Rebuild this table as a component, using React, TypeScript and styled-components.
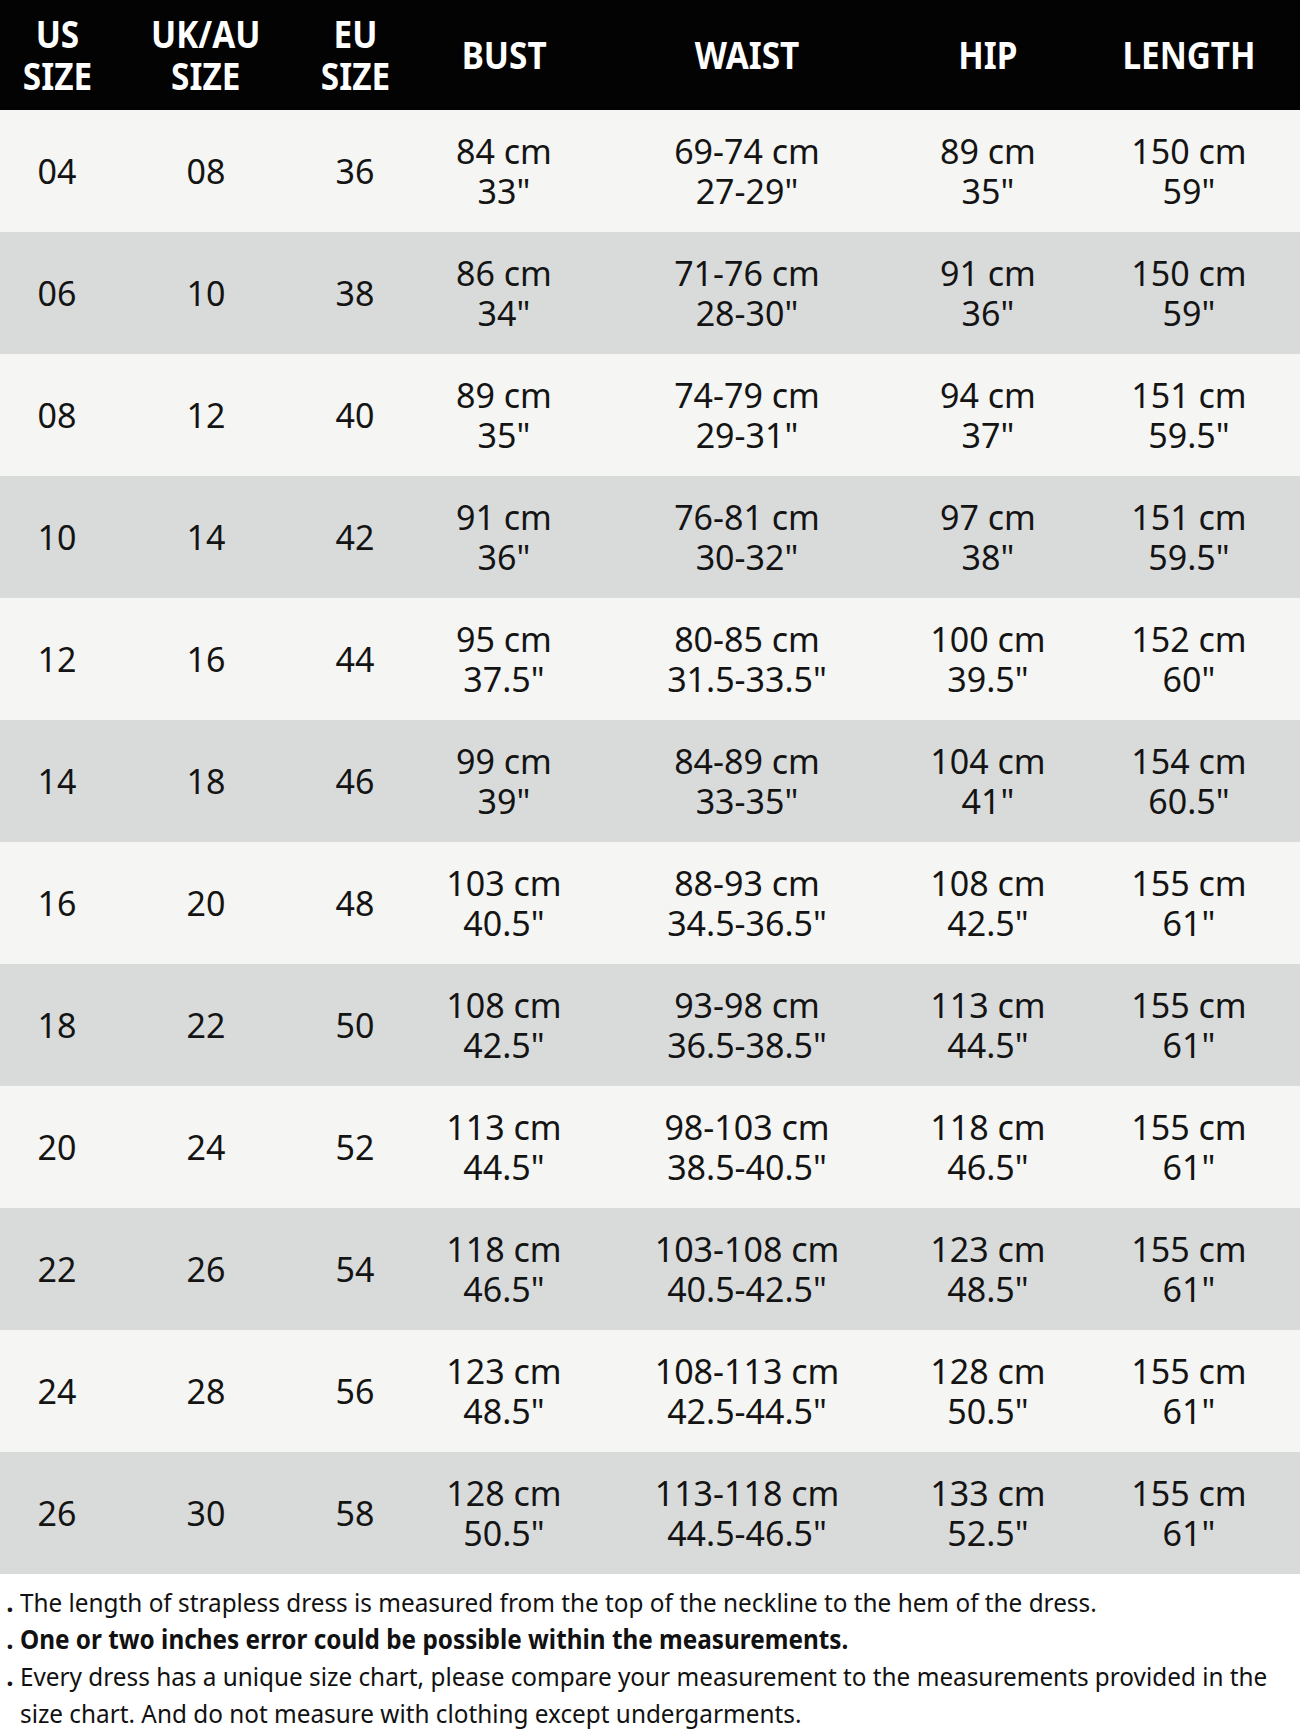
import { Fragment } from 'react'
import styled, { createGlobalStyle } from 'styled-components'

const GlobalStyle = createGlobalStyle`
  html, body {
    margin: 0;
    padding: 0;
    background: #ffffff;
  }
  body {
    width: 1300px;
    font-family: "Noto Sans", "Open Sans", sans-serif;
    color: #141414;
  }
`

type Row = [string, string, string, string[], string[], string[], string[]]

const rows: Row[] = [
  ['04', '08', '36', ['84 cm', '33"'], ['69-74 cm', '27-29"'], ['89 cm', '35"'], ['150 cm', '59"']],
  ['06', '10', '38', ['86 cm', '34"'], ['71-76 cm', '28-30"'], ['91 cm', '36"'], ['150 cm', '59"']],
  ['08', '12', '40', ['89 cm', '35"'], ['74-79 cm', '29-31"'], ['94 cm', '37"'], ['151 cm', '59.5"']],
  ['10', '14', '42', ['91 cm', '36"'], ['76-81 cm', '30-32"'], ['97 cm', '38"'], ['151 cm', '59.5"']],
  ['12', '16', '44', ['95 cm', '37.5"'], ['80-85 cm', '31.5-33.5"'], ['100 cm', '39.5"'], ['152 cm', '60"']],
  ['14', '18', '46', ['99 cm', '39"'], ['84-89 cm', '33-35"'], ['104 cm', '41"'], ['154 cm', '60.5"']],
  ['16', '20', '48', ['103 cm', '40.5"'], ['88-93 cm', '34.5-36.5"'], ['108 cm', '42.5"'], ['155 cm', '61"']],
  ['18', '22', '50', ['108 cm', '42.5"'], ['93-98 cm', '36.5-38.5"'], ['113 cm', '44.5"'], ['155 cm', '61"']],
  ['20', '24', '52', ['113 cm', '44.5"'], ['98-103 cm', '38.5-40.5"'], ['118 cm', '46.5"'], ['155 cm', '61"']],
  ['22', '26', '54', ['118 cm', '46.5"'], ['103-108 cm', '40.5-42.5"'], ['123 cm', '48.5"'], ['155 cm', '61"']],
  ['24', '28', '56', ['123 cm', '48.5"'], ['108-113 cm', '42.5-44.5"'], ['128 cm', '50.5"'], ['155 cm', '61"']],
  ['26', '30', '58', ['128 cm', '50.5"'], ['113-118 cm', '44.5-46.5"'], ['133 cm', '52.5"'], ['155 cm', '61"']],
]

const headers: string[][] = [
  ['US', 'SIZE'],
  ['UK/AU', 'SIZE'],
  ['EU', 'SIZE'],
  ['BUST'],
  ['WAIST'],
  ['HIP'],
  ['LENGTH'],
]

const COLUMNS = '114px 184px 114px 184px 302px 180px 222px'

// one text block, lines split by <br />
const lines = (parts: string[]) =>
  parts.map((p, i) => (
    <Fragment key={i}>
      {i > 0 && <br />}
      {p}
    </Fragment>
  ))

const App: React.FunctionComponent = () => {
  return (
    <Page>
      <GlobalStyle />
      <Table>
        <HeaderRow>
          {headers.map((h, i) => (
            <HeadCell key={i}>
              <HeadText>{lines(h)}</HeadText>
            </HeadCell>
          ))}
        </HeaderRow>
        {rows.map((row, i) => (
          <BodyRow key={row[0]} $shaded={i % 2 === 1}>
            {row.map((cell, j) => (
              <Cell key={j}>
                <CellText>{Array.isArray(cell) ? lines(cell) : cell}</CellText>
              </Cell>
            ))}
          </BodyRow>
        ))}
      </Table>
      <Notes>
        <Note>
          <Dot>.</Dot>
          <NoteText>The length of strapless dress is measured from the top of the neckline to the hem of the dress.</NoteText>
        </Note>
        <Note $bold>
          <Dot>.</Dot>
          <NoteText>One or two inches error could be possible within the measurements.</NoteText>
        </Note>
        <Note>
          <Dot>.</Dot>
          <NoteText>Every dress has a unique size chart, please compare your measurement to the measurements provided in the</NoteText>
        </Note>
        <Note>
          <Dot />
          <NoteText>size chart. And do not measure with clothing except undergarments.</NoteText>
        </Note>
      </Notes>
    </Page>
  )
}

const Page = styled.div`
  width: 1300px;
  min-height: 1732px;
  background: #ffffff;
`

const Table = styled.div`
  display: flex;
  flex-direction: column;
`

const HeaderRow = styled.div`
  display: grid;
  grid-template-columns: ${COLUMNS};
  height: 110px;
  background: #030303;
`

const HeadCell = styled.div`
  display: flex;
  align-items: center;
  justify-content: center;
`

const HeadText = styled.div`
  color: #ffffff;
  font-weight: 700;
  font-size: 37px;
  line-height: 42px;
  text-align: center;
  white-space: nowrap;
  transform: scaleX(0.9);
`

const BodyRow = styled.div<{ $shaded?: boolean }>`
  display: grid;
  grid-template-columns: ${COLUMNS};
  height: 122px;
  background: ${(p) => (p.$shaded ? '#d9dbdb' : '#f5f5f3')};
`

const Cell = styled.div`
  display: flex;
  align-items: center;
  justify-content: center;
`

const CellText = styled.div`
  font-size: 34px;
  line-height: 40px;
  color: #141414;
  text-align: center;
  white-space: nowrap;
`

const Notes = styled.div`
  padding-top: 10px;
`

const Note = styled.div<{ $bold?: boolean }>`
  display: flex;
  height: 37px;
  align-items: center;
  font-weight: ${(p) => (p.$bold ? 700 : 400)};
`

const Dot = styled.span`
  width: 20px;
  flex: none;
  font-size: 26px;
  font-weight: 700;
  text-align: center;
  line-height: 37px;
`

const NoteText = styled.span`
  font-size: 26px;
  line-height: 37px;
  white-space: nowrap;
  transform: scaleX(0.935);
  transform-origin: left center;
  color: #111111;
`

export default App
